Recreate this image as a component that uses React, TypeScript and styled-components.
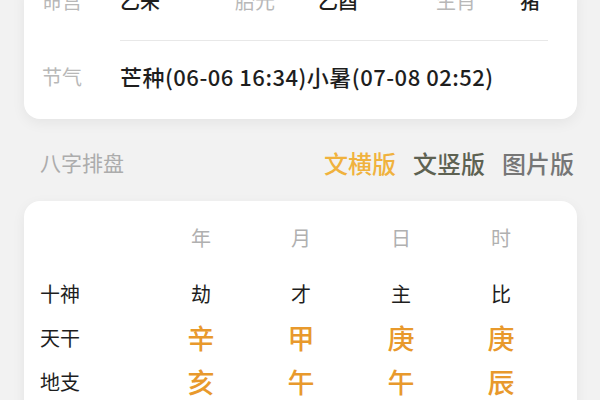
import React from 'react';
import styled, { createGlobalStyle } from 'styled-components';

const Global = createGlobalStyle`
  html, body { margin: 0; padding: 0; background: #f2f2f2; }
  body { font-family: "Noto Sans CJK SC", "Noto Sans", sans-serif; overflow: hidden; }
`;

const Page = styled.div`
  width: 600px;
  height: 400px;
  overflow: hidden;
  box-sizing: border-box;
  padding: 0 23px 0 24px;
`;

const Card = styled.div`
  background: #fff;
  border-radius: 16px;
  box-shadow: 0 4px 14px rgba(0, 0, 0, 0.06);
`;

const InfoCard = styled(Card)`
  margin-top: -20px;
  padding-bottom: 8px;
`;

const InfoRow = styled.div`
  display: grid;
  grid-template-columns: 78px 115px 83px 118px 84px 1fr;
  align-items: center;
  height: 40px;
  padding: 0 0 20px 18px;
`;

const Label = styled.span`
  font-size: 20px;
  color: #b8b8b8;
  white-space: nowrap;
`;

const Value = styled.span`
  font-size: 20px;
  color: #1e1e1e;
  font-weight: 500;
  white-space: nowrap;
`;

const Divider = styled.div`
  height: 1px;
  background: #e8e8e8;
  margin: 0 29px 0 96px;
`;

const JieqiRow = styled.div`
  display: flex;
  align-items: center;
  height: 70px;
  padding-left: 18px;
`;

const JieqiLabel = styled(Label)`
  width: 78px;
`;

const JieqiValue = styled.span`
  font-size: 22px;
  letter-spacing: 0.5px;
  font-weight: 500;
  color: #1e1e1e;
  white-space: nowrap;
`;

const SectionHeader = styled.div`
  display: flex;
  align-items: center;
  justify-content: space-between;
  box-sizing: border-box;
  height: 82px;
  padding: 4px 3px 0 16px;
`;

const SectionTitle = styled.span`
  font-size: 21px;
  color: #acacac;
`;

const Tabs = styled.div`
  display: flex;
  gap: 17px;
`;

const Tab = styled.span<{ $color: string }>`
  font-size: 24px;
  font-weight: 500;
  color: ${(p) => p.$color};
`;

const ChartCard = styled(Card)`
  padding-top: 18px;
  border-radius: 16px 16px 0 0;
  height: 220px;
`;

const ChartGrid = styled.div`
  display: grid;
  grid-template-columns: 127px repeat(4, 100px);
`;

const HeadCell = styled.div`
  height: 36px;
  margin-bottom: 16px;
  display: flex;
  align-items: center;
  justify-content: center;
  font-size: 20px;
  color: #b0b0b0;
`;

const RowLabel = styled.div`
  height: 44px;
  display: flex;
  align-items: center;
  padding-left: 16px;
  font-size: 20px;
  color: #1e1e1e;
`;

const Cell = styled.div<{ $accent?: boolean }>`
  height: 44px;
  display: flex;
  align-items: center;
  justify-content: center;
  font-size: ${(p) => (p.$accent ? '27px' : '20px')};
  color: ${(p) => (p.$accent ? '#e8992c' : '#1e1e1e')};
  font-weight: ${(p) => (p.$accent ? 500 : 400)};
`;

const heads = ['年', '月', '日', '时'];
const rows: { label: string; values: string[]; accent?: boolean }[] = [
  { label: '十神', values: ['劫', '才', '主', '比'] },
  { label: '天干', values: ['辛', '甲', '庚', '庚'], accent: true },
  { label: '地支', values: ['亥', '午', '午', '辰'], accent: true },
];

export default function App() {
  return (
    <>
      <Global />
      <Page>
        <InfoCard>
          <InfoRow>
            <Label>命宫</Label>
            <Value>乙未</Value>
            <Label>胎元</Label>
            <Value>乙酉</Value>
            <Label>生肖</Label>
            <Value>猪</Value>
          </InfoRow>
          <Divider />
          <JieqiRow>
            <JieqiLabel>节气</JieqiLabel>
            <JieqiValue>芒种(06-06 16:34)小暑(07-08 02:52)</JieqiValue>
          </JieqiRow>
        </InfoCard>
        <SectionHeader>
          <SectionTitle>八字排盘</SectionTitle>
          <Tabs>
            <Tab $color="#f0b23e">文横版</Tab>
            <Tab $color="#5e6252">文竖版</Tab>
            <Tab $color="#767676">图片版</Tab>
          </Tabs>
        </SectionHeader>
        <ChartCard>
          <ChartGrid>
            <HeadCell />
            {heads.map((h) => (
              <HeadCell key={h}>{h}</HeadCell>
            ))}
            {rows.map((r) => (
              <React.Fragment key={r.label}>
                <RowLabel>{r.label}</RowLabel>
                {r.values.map((v, i) => (
                  <Cell key={i} $accent={r.accent}>
                    {v}
                  </Cell>
                ))}
              </React.Fragment>
            ))}
          </ChartGrid>
        </ChartCard>
      </Page>
    </>
  );
}
